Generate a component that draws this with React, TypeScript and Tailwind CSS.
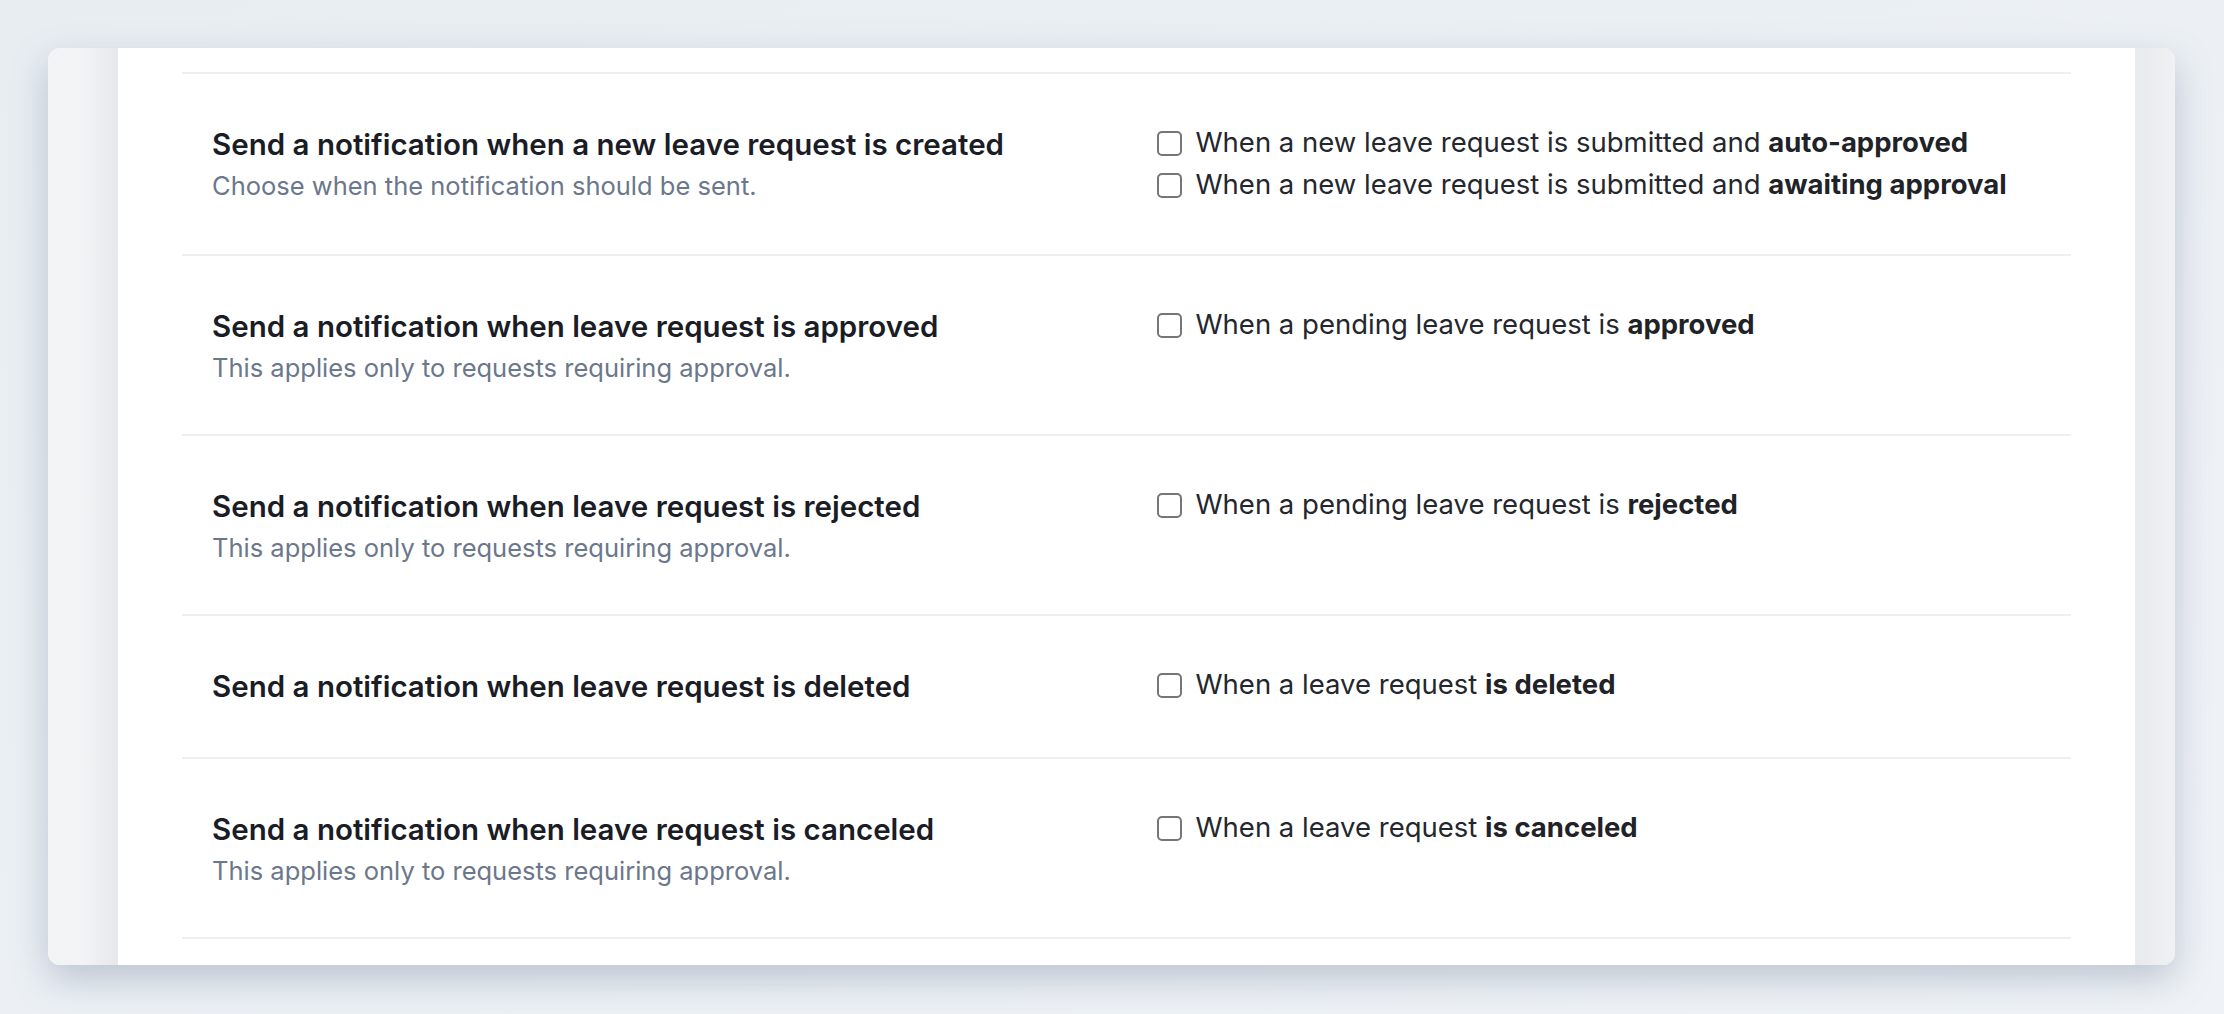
import React from "react";

type Option = { text: string; bold: string };

type Row = {
  title: string;
  description?: string;
  options: Option[];
};

const rows: Row[] = [
  {
    title: "Send a notification when a new leave request is created",
    description: "Choose when the notification should be sent.",
    options: [
      { text: "When a new leave request is submitted and ", bold: "auto-approved" },
      { text: "When a new leave request is submitted and ", bold: "awaiting approval" },
    ],
  },
  {
    title: "Send a notification when leave request is approved",
    description: "This applies only to requests requiring approval.",
    options: [{ text: "When a pending leave request is ", bold: "approved" }],
  },
  {
    title: "Send a notification when leave request is rejected",
    description: "This applies only to requests requiring approval.",
    options: [{ text: "When a pending leave request is ", bold: "rejected" }],
  },
  {
    title: "Send a notification when leave request is deleted",
    options: [{ text: "When a leave request ", bold: "is deleted" }],
  },
  {
    title: "Send a notification when leave request is canceled",
    description: "This applies only to requests requiring approval.",
    options: [{ text: "When a leave request ", bold: "is canceled" }],
  },
];

function Checkbox() {
  return (
    <span className="inline-block w-[25px] h-[25px] shrink-0 rounded-[5px] border-2 border-[#767676] bg-white" />
  );
}

function SettingRow({ row }: { row: Row }) {
  return (
    <div className="grid grid-cols-2 gap-[60px] px-[30px] py-[48px] border-b-2 border-[#efeff1]">
      <div>
        <h3 className="text-[29.5px] leading-[45px] font-semibold text-[#1a1c26]">{row.title}</h3>
        {row.description && (
          <p className="text-[25.5px] leading-[37px] text-[#6b778b]">{row.description}</p>
        )}
      </div>
      <div className="flex flex-col">
        {row.options.map((o) => (
          <label key={o.bold} className="flex items-center gap-[14px] h-[42px]">
            <Checkbox />
            <span className="text-[27.5px] text-[#24272d] whitespace-nowrap">
              {o.text}
              <span className="font-bold text-[#1f2328]">{o.bold}</span>
            </span>
          </label>
        ))}
      </div>
    </div>
  );
}

export default function App() {
  return (
    <div
      className="min-h-screen w-full bg-gradient-to-br from-[#e8edf2] to-[#eff3f7] pt-[48px] pl-[48px] pr-[49px] pb-[49px]"
      style={{ fontFamily: "Inter, 'Noto Sans', sans-serif" }}
    >
      <div className="flex h-[917px] rounded-[12px] overflow-hidden shadow-[0_14px_36px_rgba(100,116,139,0.35)]">
        {/* left sidebar strip */}
        <div className="w-[70px] shrink-0 bg-gradient-to-r from-[#f3f4f6] via-[#f2f3f5] to-[#e7e8eb]" />

        {/* main panel */}
        <div className="flex-1 bg-white overflow-hidden px-[64px] pt-[24px]">
          <div className="border-t-2 border-[#efeff1]">
            {rows.map((r) => (
              <SettingRow key={r.title} row={r} />
            ))}
          </div>
        </div>

        {/* right strip */}
        <div className="w-[40px] shrink-0 bg-gradient-to-r from-[#e9eaed] to-[#f0f1f3]" />
      </div>
    </div>
  );
}
